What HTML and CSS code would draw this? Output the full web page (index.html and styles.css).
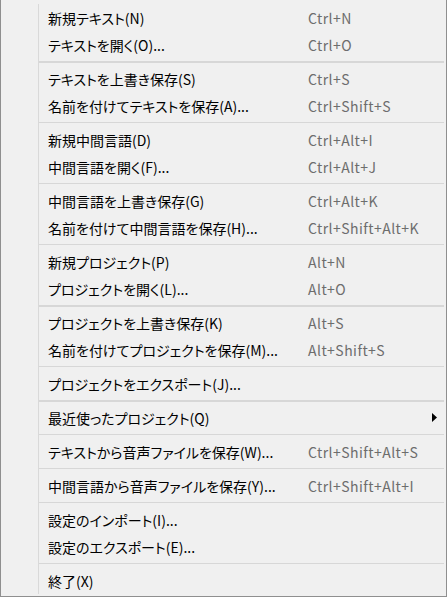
FILE: index.html
```html
<!DOCTYPE html>
<html lang="ja">
<head>
    <meta charset="UTF-8">
    <title>ファイルメニュー</title>
    <link rel="stylesheet" href="styles.css">
</head>
<body>
    <div class="menu">
        <div class="menu-list">
            <div class="item"><span class="label">新規テキスト(N)</span><span class="key">Ctrl+N</span></div>
            <div class="item"><span class="label">テキストを開く(O)...</span><span class="key">Ctrl+O</span></div>
            <div class="sep thick"></div>
            <div class="item"><span class="label">テキストを上書き保存(S)</span><span class="key">Ctrl+S</span></div>
            <div class="item"><span class="label">名前を付けてテキストを保存(A)...</span><span class="key">Ctrl+Shift+S</span></div>
            <div class="sep"></div>
            <div class="item"><span class="label">新規中間言語(D)</span><span class="key">Ctrl+Alt+I</span></div>
            <div class="item"><span class="label">中間言語を開く(F)...</span><span class="key">Ctrl+Alt+J</span></div>
            <div class="sep"></div>
            <div class="item"><span class="label">中間言語を上書き保存(G)</span><span class="key">Ctrl+Alt+K</span></div>
            <div class="item"><span class="label">名前を付けて中間言語を保存(H)...</span><span class="key">Ctrl+Shift+Alt+K</span></div>
            <div class="sep"></div>
            <div class="item"><span class="label">新規プロジェクト(P)</span><span class="key">Alt+N</span></div>
            <div class="item"><span class="label">プロジェクトを開く(L)...</span><span class="key">Alt+O</span></div>
            <div class="sep thick"></div>
            <div class="item"><span class="label">プロジェクトを上書き保存(K)</span><span class="key">Alt+S</span></div>
            <div class="item"><span class="label">名前を付けてプロジェクトを保存(M)...</span><span class="key">Alt+Shift+S</span></div>
            <div class="sep"></div>
            <div class="item"><span class="label">プロジェクトをエクスポート(J)...</span></div>
            <div class="sep thick"></div>
            <div class="item">
                <span class="label">最近使ったプロジェクト(Q)</span>
                <span class="key"></span>
                <svg class="arrow" width="5" height="9" viewBox="0 0 5 9"><path d="M0 0 L5 4.5 L0 9 Z" fill="#000"/></svg>
            </div>
            <div class="sep"></div>
            <div class="item"><span class="label">テキストから音声ファイルを保存(W)...</span><span class="key">Ctrl+Shift+Alt+S</span></div>
            <div class="sep"></div>
            <div class="item"><span class="label">中間言語から音声ファイルを保存(Y)...</span><span class="key">Ctrl+Shift+Alt+I</span></div>
            <div class="sep"></div>
            <div class="item"><span class="label">設定のインポート(I)...</span></div>
            <div class="item"><span class="label">設定のエクスポート(E)...</span></div>
            <div class="sep"></div>
            <div class="item"><span class="label">終了(X)</span></div>
        </div>
    </div>
</body>
</html>
```

FILE: styles.css
```css
body {
    margin: 0;
    background-color: #f0f0f0;
    font-family: "Noto Sans CJK JP", "Noto Sans", sans-serif;
    font-size: 14px;
    font-feature-settings: "palt";
    color: #000000;
}
.menu {
    box-sizing: border-box;
    width: 447px;
    height: 597px;
    background-color: #f0f0f0;
    border: 1px solid #8f8f8f;
    border-top: none;
    padding: 4px 0 2px 37px;
}
.menu-list {
    border-left: 1px solid #d9d9d9;
    height: 100%;
    display: flex;
    flex-direction: column;
}
.item {
    display: flex;
    align-items: center;
    height: 27px;
    padding: 0 9px;
    white-space: nowrap;
}
.label {
    width: 260px;
    flex: none;
}
.key {
    flex: 1;
    color: #6d6d6d;
    letter-spacing: 0.45px;
}
.arrow {
    flex: none;
}
.sep {
    height: 1px;
    margin: 3px 2px 3px 0;
    background-color: #d7d7d7;
}
.sep.thick {
    height: 2px;
    margin-bottom: 2px;
}
```
